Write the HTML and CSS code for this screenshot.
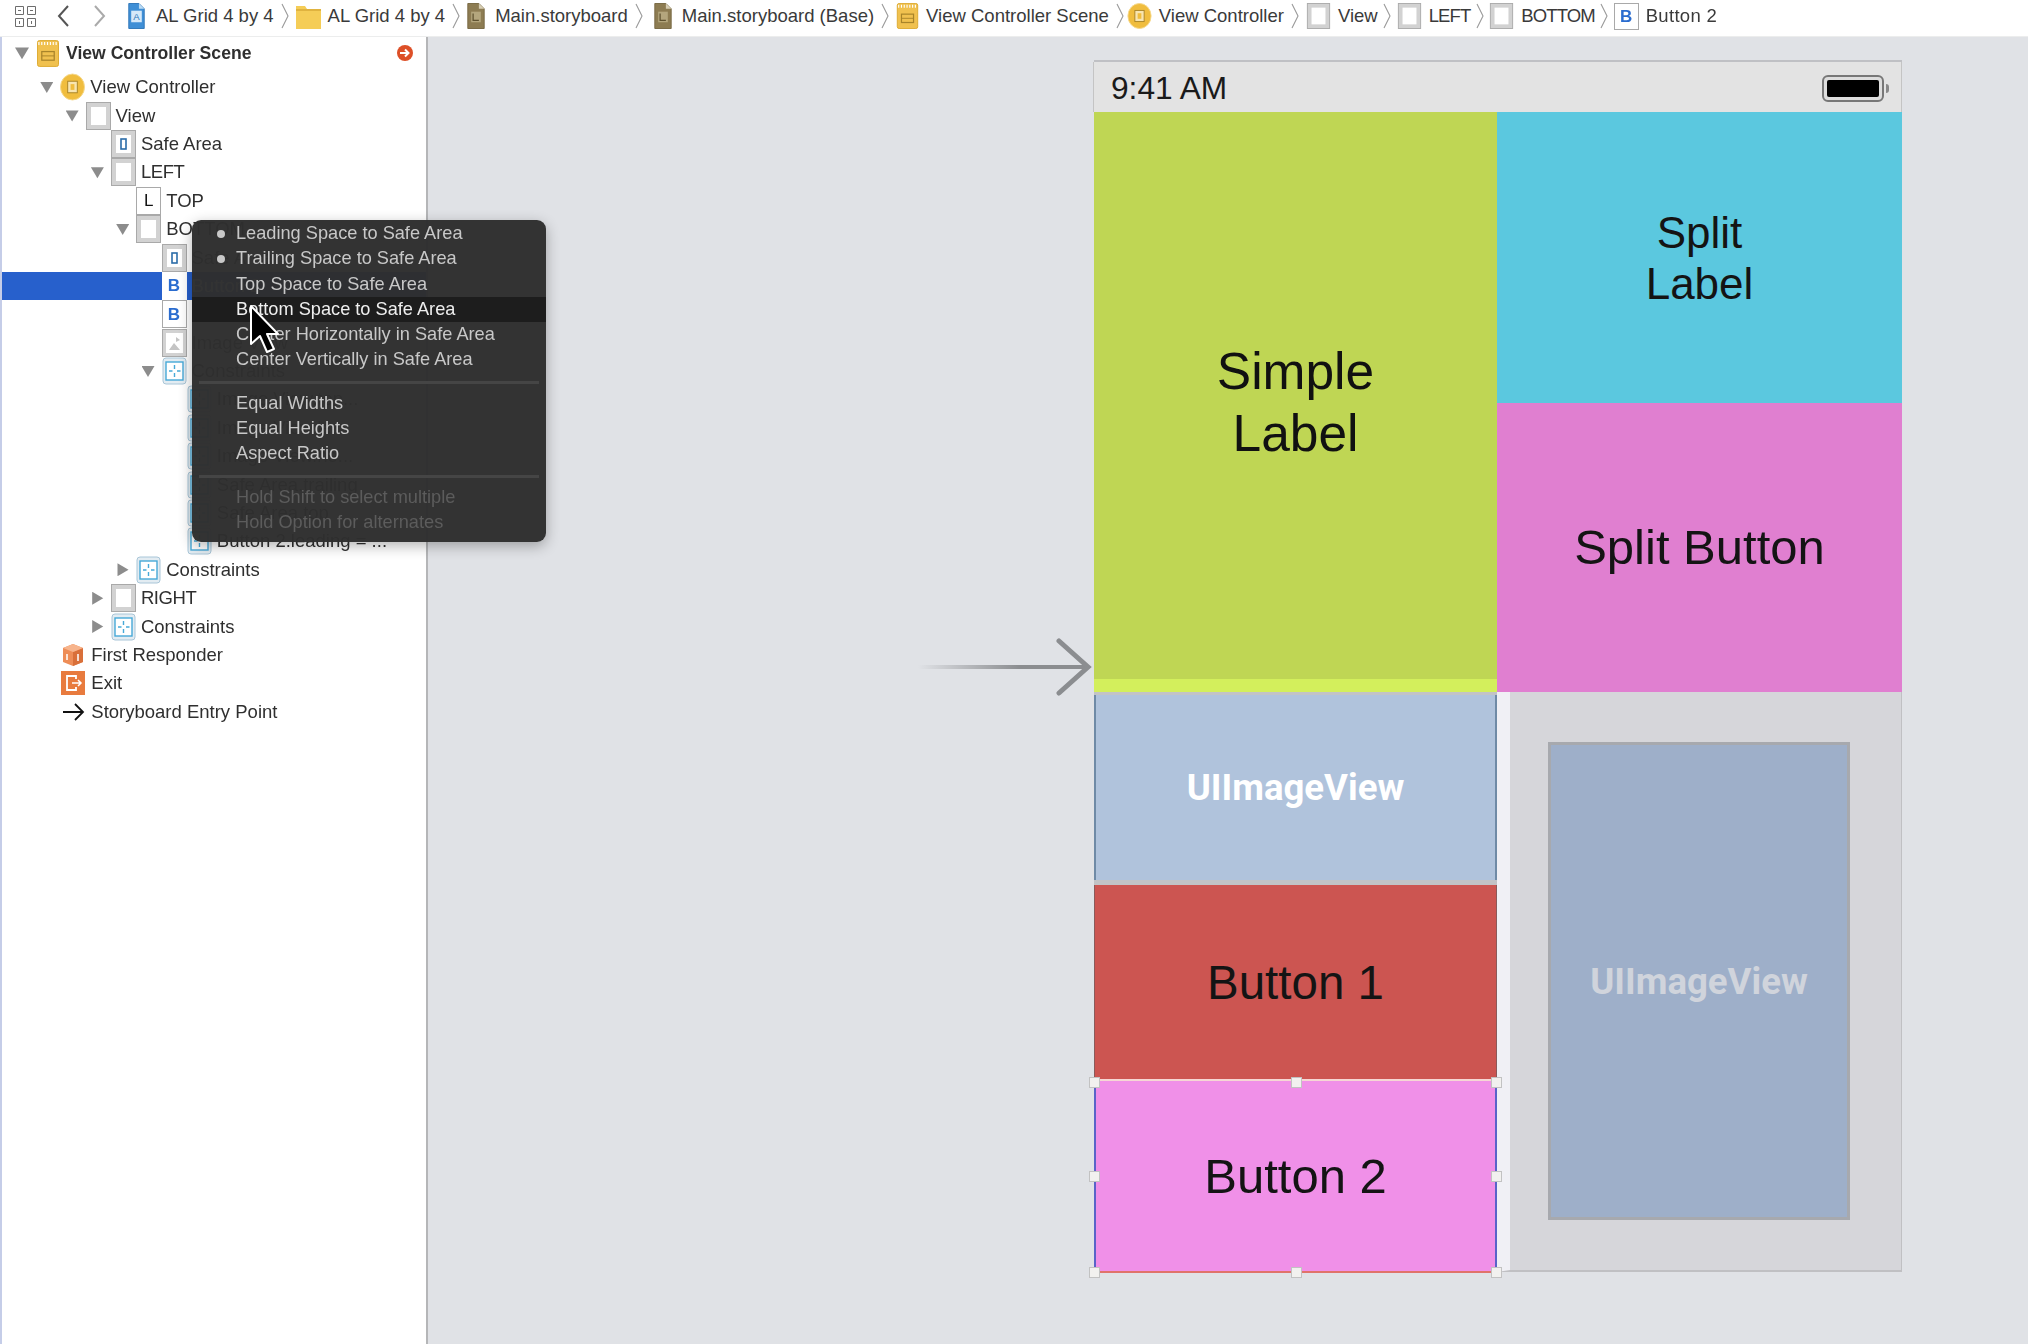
FILE: index.html
```html
<!DOCTYPE html>
<html lang="en">
<head>
<meta charset="utf-8">
<title>Main.storyboard</title>
<link rel="stylesheet" href="styles.css">
</head>
<body>
<svg class="defs" width="0" height="0" aria-hidden="true">
  <symbol id="view" viewBox="0 0 25 28"><rect x=".5" y=".5" width="24" height="27" fill="#d2d2d2" stroke="#a9a9a9"/><rect x="5" y="5" width="15" height="18" fill="#fff"/></symbol>
  <symbol id="safe" viewBox="0 0 25 28"><rect x=".5" y=".5" width="24" height="27" fill="#d2d2d2" stroke="#a9a9a9"/><rect x="5" y="5" width="15" height="18" fill="#fff"/><rect x="10" y="9" width="5" height="10" fill="#fff" stroke="#2b6ca8" stroke-width="1.6"/></symbol>
  <symbol id="cons" viewBox="0 0 25 28"><rect x="1" y="1" width="23" height="26" rx="3" fill="#e3ecf2" stroke="#a9c6d8"/><rect x="4" y="5" width="17" height="18" fill="#fff" stroke="#46a9d8" stroke-width="1.4"/><path d="M12.5 8v4M12.5 16v4M7 14h3.500M15 14h3.500" stroke="#46a9d8" stroke-width="1.4"/></symbol>
  <symbol id="image" viewBox="0 0 25 28"><rect x=".5" y=".5" width="24" height="27" fill="#d2d2d2" stroke="#a9a9a9"/><rect x="4" y="4" width="17" height="20" fill="#fff"/><path d="M7 21l5-7 6 7zM14 8l4 3-4 2z" fill="#c4c4c4"/></symbol>
  <symbol id="scene" viewBox="0 0 23 28"><rect x=".5" y=".5" width="22" height="27" rx="2" fill="#f0c14f" stroke="#dca92e"/><path d="M2 2v3M5 2v3M8 2v3M11 2v3M14 2v3M17 2v3M20 2v3" stroke="#fff" stroke-width="1.200"/><rect x="5" y="12" width="13" height="9" fill="none" stroke="#a8842a" stroke-width="1.300"/><path d="M5 16.500h13" stroke="#a8842a"/></symbol>
  <symbol id="vc" viewBox="0 0 26 28"><ellipse cx="13" cy="14" rx="12.500" ry="13.500" fill="#f0bd3e" stroke="#f6d98d"/><rect x="8" y="8" width="10" height="12" fill="#f8e5b0" stroke="#a98427"/><rect x="11" y="11" width="4" height="6" fill="#f0bd3e"/></symbol>
  <symbol id="cube" viewBox="0 0 24 24"><path d="M12 1l10 4v14l-10 4-10-4V5z" fill="#ee8d57"/><path d="M12 9l10-4v14l-10 4z" fill="#d9703a"/><path d="M12 9L2 5l10-4 10 4z" fill="#f7b48c"/><path d="M6 11v6M17 11v7" stroke="#fff" stroke-width="1.500"/></symbol>
  <symbol id="exit" viewBox="0 0 24 24"><rect width="24" height="24" fill="#e87b3e"/><path d="M15 8V5H6v14h9v-3" fill="none" stroke="#fff" stroke-width="1.800"/><path d="M11 12h9M17 9l3 3-3 3" fill="none" stroke="#fff" stroke-width="1.500"/></symbol>
  <symbol id="entry" viewBox="0 0 24 24"><path d="M2 12h20M14 4l8 8-8 8" fill="none" stroke="#111" stroke-width="1.800"/></symbol>
  <symbol id="folder" viewBox="0 0 25 26"><path d="M0 3h9l2 3h14v20H0z" fill="#f5cd57"/><path d="M0 6h25v2H0z" fill="#e0b33f"/></symbol>
  <symbol id="story" viewBox="0 0 18 27"><path d="M.5.5H12l5.500 5.500v20.500H.5z" fill="#8d7c52" stroke="#786843"/><path d="M12 .5V6h5.500z" fill="#d8cfb4"/><rect x="4" y="9" width="10" height="11" fill="#b4a67d"/><path d="M6 11v7h6" fill="none" stroke="#5f5230" stroke-width="1.300"/></symbol>
  <symbol id="crumb" viewBox="0 0 8 26"><path d="M1 1l6 12-6 12" fill="none" stroke="#9a9a9a" stroke-width="1.100"/></symbol>
</svg>

<header class="jumpbar">
  <svg class="grid-ico" viewBox="0 0 21 21"><path d="M.5.5h8v8h-8zM12.500.5h8v8h-8zM.5 12.500h8v8h-8zM12.500 12.500h8v8h-8zM3 4.500h3M15 4.500h3M4.500 15v3M16.500 15v3" fill="none" stroke="#6d6d6d"/></svg>
  <svg class="nav-ico" viewBox="0 0 13 24"><path d="M11 2L2 12l9 10" fill="none" stroke="#555" stroke-width="2"/></svg>
  <svg class="nav-ico nav-next" viewBox="0 0 13 24"><path d="M2 2l9 10-9 10" fill="none" stroke="#aaa" stroke-width="2"/></svg>
  <nav class="crumbs">
    <svg class="ci w17" viewBox="0 0 17 27"><path d="M.5.5H11l5.500 5.500v20.500H.5z" fill="#3f8fd6" stroke="#2f77b8"/><path d="M11 .5V6h5.500z" fill="#bcdcf5"/><rect x="3" y="8" width="11" height="12" fill="#d6e9f9"/><text x="8.500" y="18" font-size="10" text-anchor="middle" fill="#2f77b8" font-family="Liberation Sans">A</text></svg><span class="ct">AL Grid 4 by 4</span><svg class="sep"><use href="#crumb"/></svg>
    <svg class="ci w25"><use href="#folder"/></svg><span class="ct">AL Grid 4 by 4</span><svg class="sep"><use href="#crumb"/></svg>
    <svg class="ci w18"><use href="#story"/></svg><span class="ct">Main.storyboard</span><svg class="sep sep-wide"><use href="#crumb"/></svg>
    <svg class="ci w18"><use href="#story"/></svg><span class="ct">Main.storyboard (Base)</span><svg class="sep"><use href="#crumb"/></svg>
    <svg class="ci w23"><use href="#scene"/></svg><span class="ct">View Controller Scene</span><svg class="sep sep-tight"><use href="#crumb"/></svg>
    <svg class="ci w25"><use href="#vc"/></svg><span class="ct">View Controller</span><svg class="sep"><use href="#crumb"/></svg>
    <svg class="ci w25"><use href="#view"/></svg><span class="ct">View</span><svg class="sep sep-close"><use href="#crumb"/></svg>
    <svg class="ci w25"><use href="#view"/></svg><span class="ct caps">LEFT</span><svg class="sep sep-close"><use href="#crumb"/></svg>
    <svg class="ci w25"><use href="#view"/></svg><span class="ct caps">BOTTOM</span><svg class="sep sep-close"><use href="#crumb"/></svg>
    <span class="box box-b crumb-box">B</span><span class="ct wider">Button 2</span>
  </nav>
</header>

<main class="workspace">
  <aside class="outline">
    <div class="row scene-row"><i class="tri down"></i><svg class="ic scene-ic"><use href="#scene"/></svg><span class="scene-title">View Controller Scene</span><span class="warn"><svg viewBox="0 0 16 16"><circle cx="8" cy="8" r="8" fill="#dd4f27"/><path d="M3 8h8M8 4.500L11.500 8 8 11.500" fill="none" stroke="#fff" stroke-width="2"/></svg></span></div>
    <div class="row l1"><i class="tri down"></i><svg class="ic"><use href="#vc"/></svg><span>View Controller</span></div>
    <div class="row l2"><i class="tri down"></i><svg class="ic"><use href="#view"/></svg><span>View</span></div>
    <div class="row l3"><i class="tri"></i><svg class="ic"><use href="#safe"/></svg><span>Safe Area</span></div>
    <div class="row l3"><i class="tri down"></i><svg class="ic"><use href="#view"/></svg><span class="caps-t">LEFT</span></div>
    <div class="row l4"><i class="tri"></i><span class="box box-l ic">L</span><span>TOP</span></div>
    <div class="row l4"><i class="tri down"></i><svg class="ic"><use href="#view"/></svg><span>BOTTOM</span></div>
    <div class="row l5"><i class="tri"></i><svg class="ic"><use href="#safe"/></svg><span>Safe Area</span></div>
    <div class="row l5 selected"><i class="tri"></i><span class="box box-b ic">B</span><span>Button 2</span></div>
    <div class="row l5"><i class="tri"></i><span class="box box-b ic">B</span><span>Button 1</span></div>
    <div class="row l5"><i class="tri"></i><svg class="ic"><use href="#image"/></svg><span>Image View</span></div>
    <div class="row l5"><i class="tri down"></i><svg class="ic"><use href="#cons"/></svg><span>Constraints</span></div>
    <div class="row l6"><i class="tri"></i><svg class="ic"><use href="#cons"/></svg><span>Image View.top...</span></div>
    <div class="row l6"><i class="tri"></i><svg class="ic"><use href="#cons"/></svg><span>Image View.le...</span></div>
    <div class="row l6"><i class="tri"></i><svg class="ic"><use href="#cons"/></svg><span>Image View.he...</span></div>
    <div class="row l6"><i class="tri"></i><svg class="ic"><use href="#cons"/></svg><span>Safe Area.trailing</span></div>
    <div class="row l6"><i class="tri"></i><svg class="ic"><use href="#cons"/></svg><span>Safe Area.top</span></div>
    <div class="row l6"><i class="tri"></i><svg class="ic"><use href="#cons"/></svg><span>Button 2.leading = ...</span></div>
    <div class="row l4"><i class="tri right"></i><svg class="ic"><use href="#cons"/></svg><span>Constraints</span></div>
    <div class="row l3"><i class="tri right"></i><svg class="ic"><use href="#view"/></svg><span class="caps-t">RIGHT</span></div>
    <div class="row l3"><i class="tri right"></i><svg class="ic"><use href="#cons"/></svg><span>Constraints</span></div>
    <div class="row l1 plain"><svg class="ic sq"><use href="#cube"/></svg><span>First Responder</span></div>
    <div class="row l1 plain"><svg class="ic sq"><use href="#exit"/></svg><span>Exit</span></div>
    <div class="row l1 plain"><svg class="ic sq"><use href="#entry"/></svg><span>Storyboard Entry Point</span></div>
  </aside>

  <section class="canvas">
    <div class="entry-arrow">
      <span class="entry-line"></span>
      <svg class="entry-head" viewBox="0 0 36 58"><path d="M3 3l29 26L3 55" fill="none" stroke="#8b8d90" stroke-width="5" stroke-linecap="round"/></svg>
    </div>
    <div class="phone">
      <div class="status">
        <span class="clock">9:41 AM</span>
        <span class="battery"><i></i></span>
      </div>
      <div class="top-half">
        <div class="simple"><span class="big">Simple<br>Label</span><i class="strip"></i></div>
        <div class="top-right">
          <div class="split-label"><span class="lab lab-small">Split<br>Label</span></div>
          <div class="split-button"><span class="lab">Split Button</span></div>
        </div>
      </div>
      <div class="bottom-half">
        <div class="bottom-left">
          <div class="img-left"><span class="uiv">UIImageView</span></div>
          <div class="btn1"><span class="lab lab-b1">Button 1</span></div>
          <div class="btn2">
            <span class="lab">Button 2</span>
            <i class="h tl"></i><i class="h tc"></i><i class="h tr"></i><i class="h ml"></i><i class="h mr"></i><i class="h bl"></i><i class="h bc"></i><i class="h br"></i>
          </div>
        </div>
        <div class="bottom-right">
          <div class="img-right"><span class="uiv dim">UIImageView</span></div>
        </div>
      </div>
    </div>
  </section>
</main>

<div class="menu">
  <div class="mi on">Leading Space to Safe Area</div>
  <div class="mi on">Trailing Space to Safe Area</div>
  <div class="mi">Top Space to Safe Area</div>
  <div class="mi hot">Bottom Space to Safe Area</div>
  <div class="mi">Center Horizontally in Safe Area</div>
  <div class="mi">Center Vertically in Safe Area</div>
  <hr class="msep">
  <div class="mi">Equal Widths</div>
  <div class="mi">Equal Heights</div>
  <div class="mi">Aspect Ratio</div>
  <hr class="msep">
  <div class="mi off">Hold Shift to select multiple</div>
  <div class="mi off">Hold Option for alternates</div>
</div>

<svg class="cursor" viewBox="0 0 30 50"><path d="M2 2v38l9-8 7 16 7-3-7-15h11z" fill="#000" stroke="#fff" stroke-width="2" stroke-linejoin="round"/></svg>
</body>
</html>
```
FILE: styles.css
```css
* { box-sizing: border-box; }
html, body { margin: 0; height: 100%; }
body {
  width: 2028px; height: 1344px; overflow: hidden; position: relative;
  font-family: "Liberation Sans", Arial, sans-serif;
  font-size: 18.5px; color: #2f2f2f; background: #e0e2e6;
  filter: blur(.5px);
}
.defs { position: absolute; }

.jumpbar { height: 37px; display: flex; align-items: center; background: #fff; padding: 0 0 4px 15px; border-bottom: 1px solid #eceded; }
.grid-ico { width: 21px; height: 21px; margin-right: 21px; }
.nav-ico { width: 13px; height: 24px; margin-right: 23px; }
.nav-next { margin-right: 22px; }
.crumbs { display: flex; align-items: center; }
.ci { height: 26px; flex: none; margin-right: 8px; }
.w17 { width: 17px; margin-right: 11px; }
.w18 { width: 18px; margin-right: 10px; }
.w23 { width: 23px; margin-right: 7px; }
.w25 { width: 25px; margin-right: 7px; }
.ct { white-space: nowrap; color: #3a3a3a; }
.caps { letter-spacing: -.9px; }
.wider { letter-spacing: .3px; }
.sep { width: 8px; height: 26px; margin: 0 7px; flex: none; }
.sep-wide { margin-right: 11px; }
.sep-tight { margin-right: 3px; }
.sep-close { margin: 0 5.500px; }
.crumb-box { width: 25px; height: 27px; margin-right: 7px; }

.workspace { display: flex; height: 1307px; }
.outline { width: 428px; flex: none; background: #fff; border-left: 2px solid #c5cde8; border-right: 2px solid #b5b6b8; }
.row { height: 28.4px; display: flex; align-items: center; padding-left: 13px; white-space: nowrap; }
.row.l1 { padding-left: 38.300px; }
.row.l2 { padding-left: 63.600px; }
.row.l3 { padding-left: 88.900px; }
.row.l4 { padding-left: 114.200px; }
.row.l5 { padding-left: 139.500px; }
.row.l6 { padding-left: 164.800px; }
.tri { width: 13px; height: 13px; flex: none; margin-right: 7px; display: block; }
.tri.down { background: #8c8c8c; clip-path: polygon(0 10%, 100% 10%, 50% 95%); }
.tri.right { background: #8c8c8c; clip-path: polygon(10% 0, 95% 50%, 10% 100%); }
.ic { width: 25px; height: 28px; flex: none; margin-right: 5px; }
.caps-t { letter-spacing: -.4px; }
.plain .ic.sq { width: 24px; height: 24px; margin-left: 21px; margin-right: 6px; }
.scene-row { height: 36px; padding: 0 0 4px 13px; }
.scene-row .tri { width: 14px; height: 14px; margin-right: 8px; }
.scene-ic { width: 22px; height: 27px; margin-right: 7px; }
.scene-title { font-weight: 700; font-size: 17.600px; }
.warn { width: 16px; height: 16px; margin-left: 146px; display: block; }
.warn svg { display: block; width: 16px; height: 16px; }
.selected { background: #2760cc; color: #fff; }
.box { display: flex; align-items: center; justify-content: center; background: #fff; border: 1px solid #a9a9a9; font-size: 17px; line-height: 1; }
.box-l { color: #111; }
.box-b { color: #2a6ccf; font-weight: 700; }
.selected .box { border-color: #fff; }

.canvas { flex: 1; position: relative; padding: 23px 0 0 666px; background: #e0e2e6; }
.entry-arrow { position: absolute; left: 490px; top: 600px; width: 174px; height: 60px; }
.entry-line { position: absolute; left: 0; right: 4px; top: 28px; height: 4px; background: linear-gradient(90deg, rgba(139,141,144,0), #8b8d90 60%); }
.entry-head { position: absolute; right: 0; top: 1px; width: 36px; height: 58px; }

.phone { width: 808px; border-top: 2px solid #bfc0c4; }
.status { height: 50px; margin-left: -1px; display: flex; align-items: center; justify-content: space-between; padding: 2px 17px 0 17px; background: #e3e3e3; border-left: 1px solid #c4c4c4; border-right: 1px solid #c4c4c4; }
.clock { font-size: 31.700px; color: #1a1a1a; }
.battery { width: 62px; height: 27px; border: 2px solid #777; border-radius: 6px; background: #ddd; padding: 3px; position: relative; }
.battery i { display: block; height: 100%; background: #000; border-radius: 2px; }
.battery::after { content: ""; position: absolute; right: -7px; top: 7px; width: 3px; height: 9px; background: #888; border-radius: 0 3px 3px 0; }

.top-half { display: flex; height: 580px; }
.bottom-half { display: flex; height: 581px; }
.simple { width: 403px; position: relative; background: #bfd654; display: flex; align-items: center; justify-content: center; }
.big { font-size: 51.500px; line-height: 62px; text-align: center; color: #111; }
.strip { position: absolute; left: 0; right: 0; bottom: 0; height: 13px; background: #d3ef5c; }
.top-right { flex: 1; display: flex; flex-direction: column; }
.split-label { height: 291px; background: #5bc8df; display: flex; align-items: center; justify-content: center; }
.split-button { flex: 1; background: #e07fd0; display: flex; align-items: center; justify-content: center; }
.lab { font-size: 49px; line-height: 51px; text-align: center; color: #141414; }
.lab-small { font-size: 44px; }
.lab-b1 { font-size: 47.500px; }

.bottom-left { width: 403px; display: flex; flex-direction: column; }
.img-left { height: 193px; background: #b0c3dc; border: solid #c2c3c6; border-width: 3px 0 5px; box-shadow: inset 2px 0 #6f8aa6, inset -2px 0 #6f8aa6; display: flex; align-items: center; justify-content: center; }
.uiv { color: #fff; font-family: Roboto, sans-serif; font-weight: 700; font-size: 36.600px; }
.dim { color: #d0d4dc; }
.btn1 { height: 194px; background: #cc5551; border-left: 1px solid #8a5a5a; border-right: 1px solid #8a5a5a; display: flex; align-items: center; justify-content: center; }
.btn2 { height: 194px; position: relative; background: #f090e8; border: 2px solid #5a63c8; border-top: 2px solid #f6d6d4; border-bottom: 2px solid #e0736a; display: flex; align-items: center; justify-content: center; }
.h { position: absolute; width: 11px; height: 11px; background: #f2f1ef; border: 1px solid #c2c2c2; }
.tl { left: -7px; top: -4px; } .tc { left: 50%; margin-left: -5px; top: -4px; } .tr { right: -7px; top: -4px; }
.ml { left: -7px; top: 50%; margin-top: -5px; } .mr { right: -7px; top: 50%; margin-top: -5px; }
.bl { left: -7px; bottom: -7px; } .bc { left: 50%; margin-left: -5px; bottom: -7px; } .br { right: -7px; bottom: -7px; }

.bottom-right { flex: 1; margin-bottom: 1px; background: #d6d6da; border-left: 13px solid #f0f0f5; border-right: 1px solid #c0c0c3; border-bottom: 2px solid #c0c0c3; padding: 50px 0 0 38px; }
.img-right { width: 302px; height: 478px; background: #9eafc9; border: 3px solid #a7a9ae; display: flex; align-items: center; justify-content: center; }

.menu { position: absolute; left: 192px; top: 220px; width: 354px; height: 322px; padding: 1px 0 0; border-radius: 9px; background: rgba(46,46,46,.975); box-shadow: 0 4px 14px rgba(0,0,0,.3); color: #c8c8c8; font-size: 18.200px; }
.mi { height: 25.300px; line-height: 25.300px; padding-left: 44px; white-space: nowrap; position: relative; }
.mi.on::before { content: ""; position: absolute; left: 25px; top: 9px; width: 8px; height: 8px; border-radius: 50%; background: #c8c8c8; }
.hot { background: #1d1d1d; color: #eee; }
.off { color: #5c5c5c; }
.msep { height: 3px; border: 0; margin: 8px 7px 7px; background: #454545; }

.cursor { position: absolute; left: 249px; top: 304px; width: 30px; height: 50px; }
```
